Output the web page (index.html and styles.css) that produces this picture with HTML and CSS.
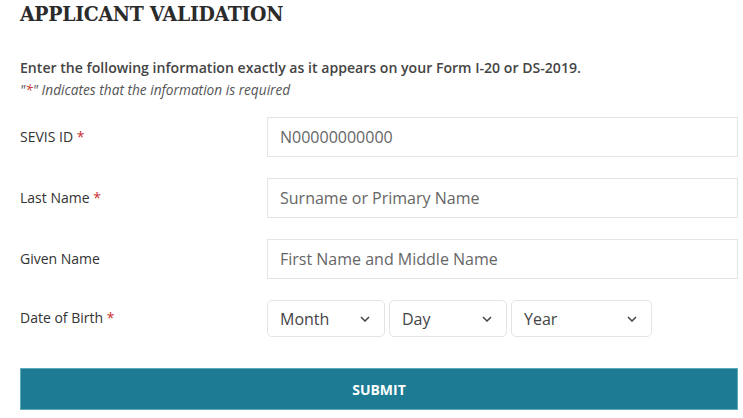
FILE: index.html
```html
<!DOCTYPE html>
<html>
<head>
<meta charset="utf-8">
<link rel="stylesheet" href="styles.css">
</head>
<body>
<main class="page">
  <h1 class="title">APPLICANT VALIDATION</h1>
  <p class="intro">Enter the following information exactly as it appears on your Form I-20 or DS-2019.</p>
  <p class="note">"<span class="req">*</span>" Indicates that the information is required</p>
  <form class="form">
    <div class="row">
      <label class="label">SEVIS ID <span class="req">*</span></label>
      <div class="field">N00000000000</div>
    </div>
    <div class="row">
      <label class="label">Last Name <span class="req">*</span></label>
      <div class="field">Surname or Primary Name</div>
    </div>
    <div class="row">
      <label class="label">Given Name</label>
      <div class="field">First Name and Middle Name</div>
    </div>
    <div class="row row-dob">
      <label class="label">Date of Birth <span class="req">*</span></label>
      <div class="selects">
        <div class="select s-month"><span>Month</span><svg class="chev" viewBox="0 0 10 6" width="10" height="6"><path d="M1 1l4 4 4-4" fill="none" stroke="#444" stroke-width="1.5"/></svg></div>
        <div class="select s-day"><span>Day</span><svg class="chev" viewBox="0 0 10 6" width="10" height="6"><path d="M1 1l4 4 4-4" fill="none" stroke="#444" stroke-width="1.5"/></svg></div>
        <div class="select s-year"><span>Year</span><svg class="chev" viewBox="0 0 10 6" width="10" height="6"><path d="M1 1l4 4 4-4" fill="none" stroke="#444" stroke-width="1.5"/></svg></div>
      </div>
    </div>
    <button type="button" class="submit">SUBMIT</button>
  </form>
</main>
</body>
</html>
```
FILE: styles.css
```css
html, body {
  margin: 0;
  padding: 0;
  background: #fff;
}
body {
  font-family: "Open Sans", "Liberation Sans", sans-serif;
  color: #333;
}
.page {
  width: 718px;
  padding: 0 0 0 20px;
}
.title {
  margin: 0;
  padding-top: 1px;
  font-family: "DejaVu Serif", "Liberation Serif", serif;
  font-stretch: condensed;
  font-weight: bold;
  font-size: 21px;
  line-height: 26px;
  color: #2b2b2b;
  letter-spacing: -0.3px;
}
.intro {
  margin: 31px 0 0;
  font-size: 14.1px;
  font-weight: 600;
  line-height: 20px;
  color: #444;
}
.note {
  margin: 2px 0 0;
  font-size: 13.7px;
  font-style: italic;
  line-height: 19px;
  color: #555;
}
.req {
  color: #c8302e;
}
.form {
  margin-top: 18px;
  display: flex;
  flex-direction: column;
  gap: 21px;
}
.row {
  display: grid;
  grid-template-columns: 247px 1fr;
  align-items: center;
}
.label {
  font-size: 14px;
  color: #333;
  margin-top: -2px;
}
.field {
  height: 40px;
  box-sizing: border-box;
  border: 1px solid #e4e4e4;
  padding: 0 12px;
  display: flex;
  align-items: center;
  font-size: 16px;
  color: #666;
}
.selects {
  display: flex;
  gap: 4px;
}
.select {
  height: 37px;
  box-sizing: border-box;
  border: 1px solid #e4e4e4;
  border-radius: 5px;
  padding: 0 14px 0 12px;
  display: flex;
  align-items: center;
  justify-content: space-between;
  font-size: 16px;
  color: #444;
}
.s-month { width: 118px; }
.s-day { width: 118px; }
.s-year { width: 141px; }
.submit {
  margin-top: 10px;
  height: 42px;
  width: 718px;
  border: 1px solid #5fa9bd;
  background: #1e7b94;
  color: #fff;
  font-family: "Open Sans", "Liberation Sans", sans-serif;
  font-weight: 700;
  font-size: 14px;
  cursor: pointer;
}
```
